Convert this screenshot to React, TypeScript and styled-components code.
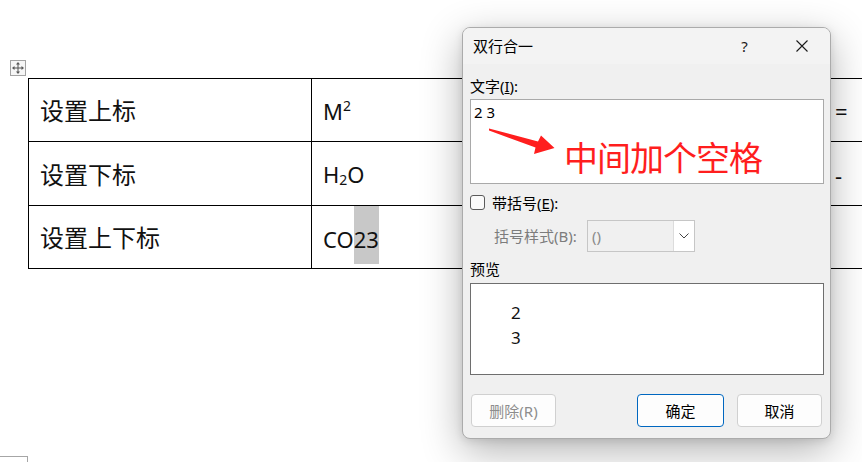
import React from 'react';
import styled, { createGlobalStyle } from 'styled-components';

const Global = createGlobalStyle`
  html, body { margin: 0; padding: 0; background: #ffffff; }
  body {
    width: 862px; height: 462px; overflow: hidden;
    font-family: "Noto Sans", "Noto Sans CJK SC", sans-serif;
  }
  * { box-sizing: border-box; }
`;

const Doc = styled.div`
  position: relative;
  width: 862px;
  height: 462px;
  overflow: hidden;
  display: flex;
  flex-direction: column;
`;

const TableWrap = styled.div`
  position: relative;
  margin: 78px 0 0 28px;
`;

const MoveHandle = styled.div`
  position: absolute;
  left: -18px;
  top: -18px;
  width: 16px;
  height: 16px;
  border: 1px solid #a3a3a3;
  background: #f6f6f6;
  display: flex;
  align-items: center;
  justify-content: center;
`;

const Table = styled.table`
  border-collapse: collapse;
  table-layout: fixed;
  width: 995px;
  font-family: "Noto Sans", "Noto Sans CJK SC", sans-serif;
  color: #111;
`;

const Row = styled.tr<{ $h: number }>`
  height: ${(p) => p.$h}px;
`;

const Cell = styled.td<{ $cjk?: boolean; $top?: boolean }>`
  border: 1px solid #000;
  padding: ${(p) => (p.$top ? '0 11px' : '3px 11px 0')};
  vertical-align: ${(p) => (p.$top ? 'top' : 'middle')};
  font-size: ${(p) => (p.$cjk ? '24px' : '22px')};
  line-height: 1.2;
  white-space: nowrap;
  overflow: hidden;
`;

const Sup = styled.span`
  font-size: 14px;
  vertical-align: 9px;
`;

const Sub = styled.span`
  font-size: 14px;
  vertical-align: -2px;
`;

const CellLine = styled.div`
  display: flex;
  height: 58px;
`;

const Seg = styled.span<{ $hl?: boolean }>`
  display: flex;
  align-items: center;
  padding-top: 9px;
  background: ${(p) => (p.$hl ? '#c8c8c8' : 'transparent')};
`;

const CornerMark = styled.div`
  margin-top: auto;
  width: 28px;
  height: 6px;
  border-top: 1px solid #a6a6a6;
  border-right: 1px solid #a6a6a6;
`;

/* ---------- dialog ---------- */

const Dialog = styled.div`
  position: absolute;
  left: 462px;
  top: 27px;
  width: 369px;
  height: 412px;
  background: #f0f0f0;
  border: 1px solid #ababab;
  border-radius: 8px;
  box-shadow: 0 12px 40px rgba(0, 0, 0, 0.3), 0 2px 8px rgba(0, 0, 0, 0.1);
  display: flex;
  flex-direction: column;
  overflow: hidden;
  font-family: "Noto Sans", "Noto Sans CJK SC", sans-serif;
  font-size: 15px;
  color: #000;
`;

const TitleBar = styled.div`
  height: 36px;
  flex: none;
  display: flex;
  align-items: center;
  background: #f3f3f3;
  padding-left: 10px;
`;

const Title = styled.span`
  flex: 1;
  line-height: 20px;
`;

const CaptionButton = styled.div`
  width: 57px;
  height: 36px;
  display: flex;
  align-items: center;
  justify-content: center;
  font-size: 15px;
  color: #1a1a1a;
`;

const Body = styled.div`
  flex: 1;
  display: flex;
  flex-direction: column;
  padding: 12px 6px 11px 7px;
`;

const FieldLabel = styled.div<{ $mt?: number }>`
  line-height: 20px;
  height: 20px;
  margin-top: ${(p) => p.$mt ?? 0}px;
`;

const TextBox = styled.div`
  position: relative;
  margin-top: 3px;
  height: 85px;
  background: #fff;
  border: 1px solid #a9a9a9;
  padding: 2px 3px;
  line-height: 20px;
`;

const Annotation = styled.span`
  position: absolute;
  left: 93px;
  top: 40px;
  font-family: "Noto Sans CJK SC", sans-serif;
  font-size: 34px;
  letter-spacing: -1px;
  line-height: 1;
  color: #ff1e1e;
`;

const ArrowSvg = styled.svg`
  position: absolute;
  left: 0;
  top: 0;
`;

const CheckRow = styled.div`
  margin-top: 8px;
  height: 20px;
  display: flex;
  align-items: center;
  gap: 7px;
`;

const CheckBox = styled.span`
  width: 15px;
  height: 15px;
  border: 1px solid #5a5a5a;
  border-radius: 3px;
  background: #fafafa;
`;

const BracketRow = styled.div`
  margin-top: 8px;
  height: 32px;
  display: flex;
  align-items: center;
  padding-left: 24px;
`;

const MutedLabel = styled.span`
  width: 93px;
  color: #7c7c7c;
  line-height: 20px;
`;

const Select = styled.div`
  width: 108px;
  height: 32px;
  display: flex;
  border: 1px solid #c6c6c6;
  background: #f0f0f0;
`;

const SelectValue = styled.span`
  flex: 1;
  padding-left: 4px;
  display: flex;
  align-items: center;
  color: #8a8a8a;
`;

const SelectArrow = styled.span`
  width: 21px;
  background: #fff;
  border-left: 1px solid #dcdcdc;
  display: flex;
  align-items: center;
  justify-content: center;
`;

const PreviewBox = styled.div`
  margin-top: 4px;
  height: 92px;
  background: #fff;
  border: 1px solid #6e6e6e;
  padding: 16px 0 0 40px;
  font-size: 17px;
  line-height: 25px;
  color: #111;
`;

const ButtonRow = styled.div`
  margin-top: 19px;
  height: 33px;
  display: flex;
  padding-left: 1px;
  padding-right: 2px;
`;

const Button = styled.div<{ $w: number; $primary?: boolean; $disabled?: boolean; $ml?: string }>`
  width: ${(p) => p.$w}px;
  height: 33px;
  margin-left: ${(p) => p.$ml ?? '0'};
  display: flex;
  align-items: center;
  justify-content: center;
  background: #fdfdfd;
  border: 1px solid ${(p) => (p.$primary ? '#0067c0' : '#d0d0d0')};
  border-radius: 4px;
  color: ${(p) => (p.$disabled ? '#8d8d8d' : '#000')};
`;

const MoveIcon = () => (
  <svg width="12" height="12" viewBox="0 0 12 12">
    <g stroke="#555" strokeWidth="1" fill="none">
      <line x1="6" y1="1.5" x2="6" y2="10.5" />
      <line x1="1.5" y1="6" x2="10.5" y2="6" />
    </g>
    <g fill="#555">
      <polygon points="6,0 4,2.5 8,2.5" />
      <polygon points="6,12 4,9.5 8,9.5" />
      <polygon points="0,6 2.5,4 2.5,8" />
      <polygon points="12,6 9.5,4 9.5,8" />
    </g>
  </svg>
);

const CloseIcon = () => (
  <svg width="12" height="12" viewBox="0 0 12 12">
    <path d="M0.5 0.5 L11.5 11.5 M11.5 0.5 L0.5 11.5" stroke="#1a1a1a" strokeWidth="1.1" fill="none" />
  </svg>
);

const Chevron = () => (
  <svg width="10" height="6" viewBox="0 0 10 6">
    <path d="M0.5 0.5 L5 5 L9.5 0.5" stroke="#444" strokeWidth="1" fill="none" />
  </svg>
);

export default function App() {
  return (
    <>
      <Global />
      <Doc>
        <TableWrap>
          <MoveHandle>
            <MoveIcon />
          </MoveHandle>
          <Table>
            <colgroup>
              <col style={{ width: 283 }} />
              <col style={{ width: 512 }} />
              <col style={{ width: 200 }} />
            </colgroup>
            <tbody>
              <Row $h={63}>
                <Cell $cjk>设置上标</Cell>
                <Cell>
                  M<Sup>2</Sup>
                </Cell>
                <Cell>=</Cell>
              </Row>
              <Row $h={64}>
                <Cell $cjk>设置下标</Cell>
                <Cell>
                  H<Sub>2</Sub>O
                </Cell>
                <Cell>-</Cell>
              </Row>
              <Row $h={63}>
                <Cell $cjk>设置上下标</Cell>
                <Cell $top>
                  <CellLine>
                    <Seg>CO</Seg>
                    <Seg $hl>23</Seg>
                  </CellLine>
                </Cell>
                <Cell />
              </Row>
            </tbody>
          </Table>
        </TableWrap>
        <CornerMark />

        <Dialog>
          <TitleBar>
            <Title>双行合一</Title>
            <CaptionButton>?</CaptionButton>
            <CaptionButton>
              <CloseIcon />
            </CaptionButton>
          </TitleBar>
          <Body>
            <FieldLabel>
              文字(<u>I</u>):
            </FieldLabel>
            <TextBox>
              2 3
              <ArrowSvg width="100" height="70" viewBox="0 0 100 70">
                <polygon
                  points="18,28.5 67,41.5 70,35.5 83.5,48 63,54 64.5,47.5 18,30.5"
                  fill="#ff1e1e"
                />
              </ArrowSvg>
              <Annotation>中间加个空格</Annotation>
            </TextBox>
            <CheckRow>
              <CheckBox />
              <span>
                带括号(<u>E</u>):
              </span>
            </CheckRow>
            <BracketRow>
              <MutedLabel>括号样式(B):</MutedLabel>
              <Select>
                <SelectValue>()</SelectValue>
                <SelectArrow>
                  <Chevron />
                </SelectArrow>
              </Select>
            </BracketRow>
            <FieldLabel $mt={7}>预览</FieldLabel>
            <PreviewBox>
              <div>2</div>
              <div>3</div>
            </PreviewBox>
            <ButtonRow>
              <Button $w={85} $disabled>
                删除(R)
              </Button>
              <Button $w={87} $primary $ml="auto">
                确定
              </Button>
              <Button $w={85} $ml="13px">
                取消
              </Button>
            </ButtonRow>
          </Body>
        </Dialog>
      </Doc>
    </>
  );
}
